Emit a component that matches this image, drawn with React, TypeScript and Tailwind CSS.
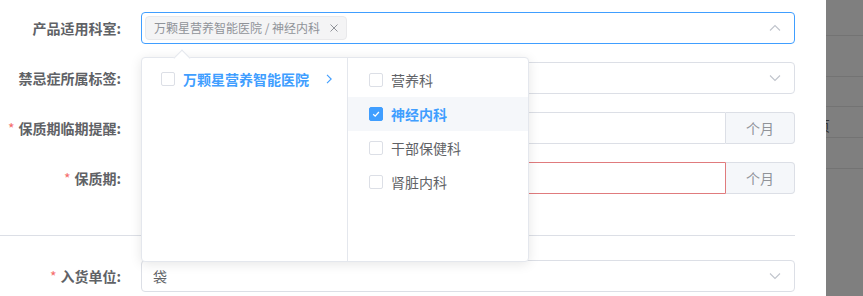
import React from "react";

const FONT = { fontFamily: '"Noto Sans CJK SC", "Noto Sans", sans-serif' };

function ChevronDown() {
  return (
    <svg width="14" height="14" viewBox="0 0 14 14" fill="none">
      <path d="M2 4.5 L7 9.5 L12 4.5" stroke="#c0c4cc" strokeWidth="1.1" />
    </svg>
  );
}
function ChevronUp() {
  return (
    <svg width="14" height="14" viewBox="0 0 14 14" fill="none">
      <path d="M2 9.5 L7 4.5 L12 9.5" stroke="#c0c4cc" strokeWidth="1.1" />
    </svg>
  );
}

function Label({ text, required }: { text: string; required?: boolean }) {
  return (
    <div className="w-[141px] shrink-0 pr-[20px] flex justify-end items-center text-[14px] font-bold text-[#606266] leading-none">
      {required && <span className="text-[#f56c6c] mr-[4px] font-normal text-[14px]">*</span>}
      <span>{text}</span>
    </div>
  );
}

function Checkbox({ checked }: { checked?: boolean }) {
  return checked ? (
    <span className="w-[14px] h-[14px] rounded-[2px] bg-[#409eff] border border-[#409eff] flex items-center justify-center shrink-0">
      <svg width="10" height="10" viewBox="0 0 10 10" fill="none">
        <path d="M2.2 5.2 L4.2 7.1 L7.9 3" stroke="#fff" strokeWidth="1.3" />
      </svg>
    </span>
  ) : (
    <span className="w-[14px] h-[14px] rounded-[2px] bg-white border border-[#dcdfe6] shrink-0" />
  );
}

export default function App() {
  return (
    <div className="w-[863px] h-[296px] flex overflow-hidden bg-white" style={FONT}>
      <div className="w-[826px] h-full relative bg-white">
        <div className="w-[795px] pt-[12px] flex flex-col">
          {/* row 1 */}
          <div className="flex h-[32px]">
            <Label text="产品适用科室:" />
            <div className="flex-1 h-[32px] border border-[#409eff] rounded-[4px] flex items-center pl-[3px] pr-[12px]">
              <div className="h-[24px] bg-[#f4f4f5] border border-[#e9e9eb] rounded-[4px] flex items-center pl-[8px] pr-[7px] text-[12px] text-[#909399]">
                <span>万颗星营养智能医院 / 神经内科</span>
                <svg className="ml-[9px]" width="10" height="10" viewBox="0 0 10 10" fill="none">
                  <path d="M1.5 1.5 L8.5 8.5 M8.5 1.5 L1.5 8.5" stroke="#909399" strokeWidth="1" />
                </svg>
              </div>
              <div className="flex-1" />
              <ChevronUp />
            </div>
          </div>
          {/* row 2 */}
          <div className="flex h-[32px] mt-[18px]">
            <Label text="禁忌症所属标签:" />
            <div className="flex-1 h-[32px] border border-[#dcdfe6] rounded-[4px] flex items-center justify-end pr-[12px]">
              <ChevronDown />
            </div>
          </div>
          {/* row 3 */}
          <div className="flex h-[32px] mt-[18px]">
            <Label text="保质期临期提醒:" required />
            <div className="flex-1 flex h-[32px]">
              <div className="flex-1 border border-[#dcdfe6] rounded-l-[4px]" />
              <div className="w-[69px] bg-[#f5f7fa] border border-l-0 border-[#dcdfe6] rounded-r-[4px] flex items-center justify-center text-[14px] text-[#909399]">
                个月
              </div>
            </div>
          </div>
          {/* row 4 */}
          <div className="flex h-[32px] mt-[18px]">
            <Label text="保质期:" required />
            <div className="flex-1 flex h-[32px]">
              <div className="flex-1 border border-[#e07b7d] rounded-l-[4px]" />
              <div className="w-[69px] bg-[#f5f7fa] border border-l-0 border-[#dcdfe6] rounded-r-[4px] flex items-center justify-center text-[14px] text-[#909399]">
                个月
              </div>
            </div>
          </div>
          {/* divider */}
          <div className="h-px bg-[#dcdfe6] mt-[41px]" />
          {/* row 5 */}
          <div className="flex h-[32px] mt-[24px]">
            <Label text="入货单位:" required />
            <div className="flex-1 h-[32px] border border-[#dcdfe6] rounded-[4px] flex items-center pl-[11px] pr-[12px]">
              <span className="text-[14px] text-[#606266] flex-1">袋</span>
              <ChevronDown />
            </div>
          </div>
        </div>

        {/* cascader dropdown */}
        <div className="absolute left-[141px] top-[57px] w-[388px] h-[205px] bg-white border border-[#e4e7ed] rounded-[4px] shadow-[0_2px_12px_rgba(0,0,0,0.1)] flex">
          <div className="absolute -top-[6px] left-[34px] w-[12px] h-[12px] rotate-45 bg-white border-l border-t border-[#e4e7ed]" />
          <div className="w-[206px] h-full border-r border-[#e4e7ed] pt-[4px] relative">
            <div className="h-[34px] flex items-center pl-[19px] pr-[12px]">
              <Checkbox />
              <span className="ml-[8px] text-[14px] font-bold text-[#409eff] flex-1">万颗星营养智能医院</span>
              <svg width="12" height="12" viewBox="0 0 12 12" fill="none">
                <path d="M4 1.8 L8.2 6 L4 10.2" stroke="#409eff" strokeWidth="1.1" />
              </svg>
            </div>
          </div>
          <div className="flex-1 h-full pt-[5px]">
            {[
              { t: "营养科" },
              { t: "神经内科", c: true },
              { t: "干部保健科" },
              { t: "肾脏内科" },
            ].map((it) => (
              <div
                key={it.t}
                className={`h-[34px] flex items-center pl-[21px] ${it.c ? "bg-[#f5f7fa]" : ""}`}
              >
                <Checkbox checked={it.c} />
                <span
                  className={`ml-[8px] text-[14px] ${it.c ? "font-bold text-[#409eff]" : "text-[#606266]"}`}
                >
                  {it.t}
                </span>
              </div>
            ))}
          </div>
        </div>
      </div>

      {/* overlay background */}
      <div className="flex-1 h-full bg-[#7f7f7f] flex flex-col overflow-hidden relative">
        <div className="h-[36px] border-b border-[#737373]" />
        <div className="h-[41px] border-b border-[#737373]" />
        <div className="h-[30px] border-b border-[#737373]" />
        <div className="h-[31px] border-b border-[#737373] relative overflow-hidden">
          <span className="absolute -left-[10px] top-[8px] text-[14px] text-[#333]">页</span>
        </div>
        <div className="h-[31px] border-b border-[#737373]" />
      </div>
    </div>
  );
}
